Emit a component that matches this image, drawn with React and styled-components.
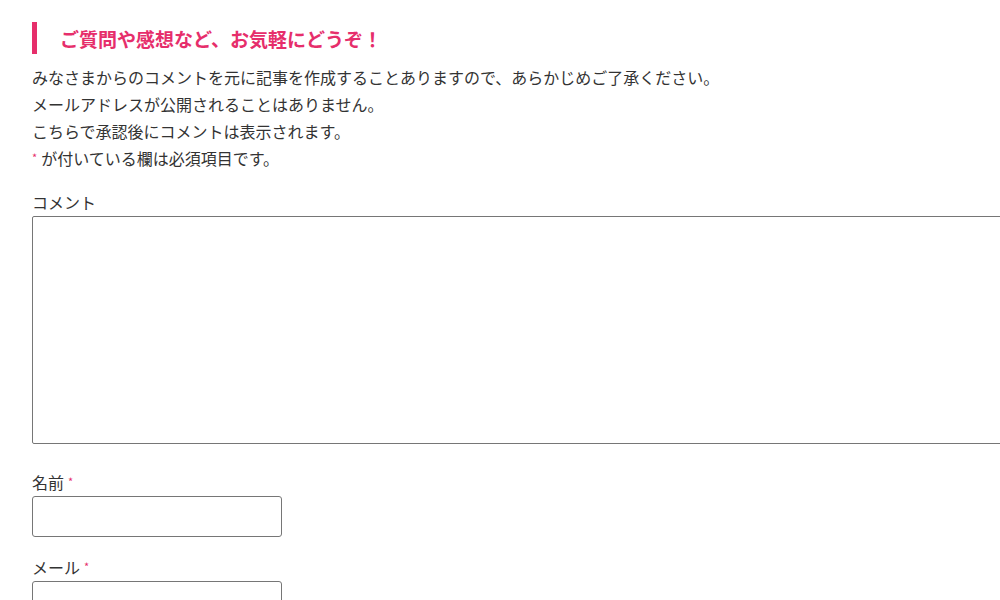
import React from 'react'
import styled, { createGlobalStyle } from 'styled-components'

const GlobalStyle = createGlobalStyle`
html, body {
  margin: 0;
  padding: 0;
  overflow: hidden;
  background: #ffffff;
}
body {
  font-family: "Noto Sans CJK JP", "Noto Sans", sans-serif;
  color: #333333;
}
`

const Section = styled.section`
  padding: 22px 0 0 32px;
  width: 1100px;
`

const Heading = styled.h3`
  margin: 0;
  height: 32px;
  display: flex;
  align-items: center;
  border-left: 5px solid #e62e6b;
  padding-left: 23px;
  font-size: 19px;
  font-weight: 700;
  color: #e62e6b;
`

const Notes = styled.div`
  margin-top: 10px;
  font-size: 16px;
  line-height: 27px;
  p {
    margin: 0;
    height: 27px;
  }
`

const Required = styled.span`
  color: #e62e6b;
  font-size: 11px;
  position: relative;
  top: -3px;
  margin-left: ${p => (p.$after ? '4px' : '0')};
  margin-right: ${p => (p.$after ? '0' : '4px')};
`

const Field = styled.div`
  margin-top: ${p => p.$gap}px;
`

const Label = styled.label`
  display: block;
  font-size: 16px;
  line-height: 24px;
  height: 24px;
  margin-bottom: 2px;
`

const TextArea = styled.textarea`
  display: block;
  box-sizing: border-box;
  width: 1000px;
  height: 228px;
  margin: 0;
  border: 1px solid #767676;
  border-radius: 2px;
  resize: none;
  background: #fff;
`

const Input = styled.input`
  display: block;
  box-sizing: border-box;
  width: 250px;
  height: 41px;
  margin: 0;
  border: 1px solid #767676;
  border-radius: 3px;
  background: #fff;
`

const App = () => {
  return (
    <>
      <GlobalStyle />
      <Section>
        <Heading>ご質問や感想など、お気軽にどうぞ！</Heading>
        <Notes>
          <p>みなさまからのコメントを元に記事を作成することありますので、あらかじめご了承ください。</p>
          <p>メールアドレスが公開されることはありません。</p>
          <p>こちらで承認後にコメントは表示されます。</p>
          <p><Required>*</Required>が付いている欄は必須項目です。</p>
        </Notes>
        <Field $gap={18}>
          <Label htmlFor="comment">コメント</Label>
          <TextArea id="comment" />
        </Field>
        <Field $gap={26}>
          <Label htmlFor="author">名前<Required $after>*</Required></Label>
          <Input id="author" type="text" />
        </Field>
        <Field $gap={18}>
          <Label htmlFor="email">メール<Required $after>*</Required></Label>
          <Input id="email" type="email" />
        </Field>
      </Section>
    </>
  )
}

export default App
